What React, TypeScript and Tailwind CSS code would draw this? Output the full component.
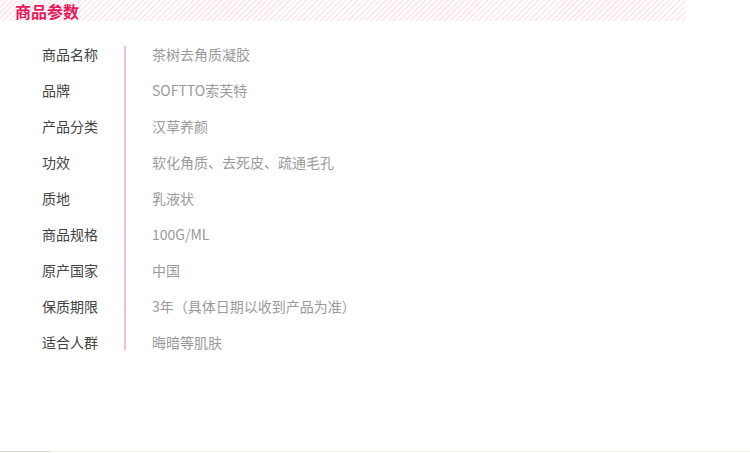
import React from 'react';

interface Param {
  label: string;
  value: string;
}

const PARAMS: Param[] = [
  { label: '商品名称', value: '茶树去角质凝胶' },
  { label: '品牌', value: 'SOFTTO索芙特' },
  { label: '产品分类', value: '汉草养颜' },
  { label: '功效', value: '软化角质、去死皮、疏通毛孔' },
  { label: '质地', value: '乳液状' },
  { label: '商品规格', value: '100G/ML' },
  { label: '原产国家', value: '中国' },
  { label: '保质期限', value: '3年（具体日期以收到产品为准）' },
  { label: '适合人群', value: '晦暗等肌肤' },
];

export default function App() {
  return (
    <div className="w-[750px] h-[453px] bg-white flex flex-col font-['Noto_Sans_CJK_SC','Noto_Sans',sans-serif]">
      {/* title band */}
      <div className="w-[686px] h-[21px] flex items-center pl-[15px] bg-[repeating-linear-gradient(135deg,#fbeaf0_0px,#fbeaf0_2px,#ffffff_2px,#ffffff_4px)]">
        <span className="text-[16px] leading-[24px] font-bold text-[#e6195a] whitespace-nowrap">商品参数</span>
      </div>

      {/* params table */}
      <div className="flex pl-[42px] mt-[15px]">
        <div className="w-[82px] flex flex-col">
          {PARAMS.map((p) => (
            <div key={p.label} className="h-[36px] flex items-center text-[14px] text-[#444]">
              {p.label}
            </div>
          ))}
        </div>
        <div className="w-[2px] my-[10px] bg-[#f6c0d2]" />
        <div className="flex flex-col pl-[26px]">
          {PARAMS.map((p) => (
            <div key={p.label} className="h-[36px] flex items-center text-[14px] text-[#9a9a9a]">
              {p.value}
            </div>
          ))}
        </div>
      </div>

      <div className="flex-1" />
      <div className="flex h-[1px] mb-[1px]">
        <div className="w-[50px] bg-[#e3dccd]" />
        <div className="flex-1 bg-[#f3f1e4]" />
      </div>
    </div>
  );
}
